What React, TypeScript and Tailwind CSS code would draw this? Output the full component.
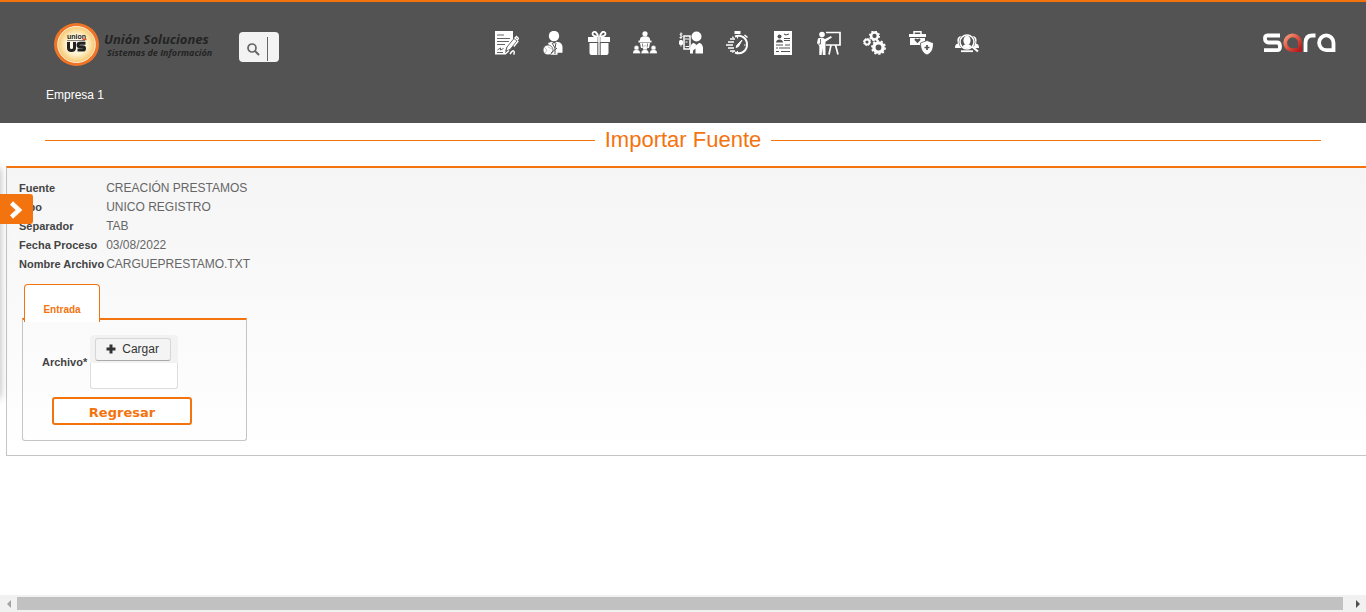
import type { ReactNode } from "react";

function Icon({ children }: { children: ReactNode }) {
  return (
    <svg viewBox="0 0 24 24" className="size-6" fill="#fff" stroke="none" aria-hidden="true">
      {children}
    </svg>
  );
}

const dark = "#535353";

const modules: { name: string; icon: ReactNode }[] = [
  {
    name: "Contratos",
    icon: (
      <>
        <path d="M0 0h18v9l-7 8-1 6.500H0z" />
        <path d="M2 4h7M2 7.500h13M2 10.500h12M2 13.500h8M2.500 19l3-2 0 2 3-1.500M2 21.500h6" stroke={dark} strokeWidth=".9" fill="none" />
        <path d="M12 16l7-8.500 3 2.500L15 18.500l-4 1.500z" stroke={dark} strokeWidth=".8" />
        <path d="M20 7l1.500-1.500 2 2-1.200 1.500zM23.300 10l-4.500 5.500M10 23.200l4-3.700M15 23c2-3 3-4 4-2.500s-1 3 .5 2.500" stroke="#fff" strokeWidth="1.400" fill="none" />
      </>
    ),
  },
  {
    name: "Empleados",
    icon: (
      <>
        <circle cx="13" cy="5" r="5.200" />
        <path d="M7 12l4-1.300 2 2 2.500-2c4 .3 6 2.300 6 6v5h-5v2H9v-6z" />
        <circle cx="7" cy="19" r="5" stroke={dark} strokeWidth=".8" />
        <path d="M11 12l3 5v6M15 12l-1 5M10 22l6-5" stroke={dark} fill="none" />
        <path d="M3 16l3 3-2 3M7 16l4 2" stroke="#aaa" strokeWidth=".7" fill="none" />
      </>
    ),
  },
  {
    name: "Beneficios",
    icon: (
      <>
        <path d="M1 6h22v5H1zM2.500 12h8V24h-6a2 2 0 0 1-2-2zM13.500 12h8V22a2 2 0 0 1-2 2h-6zM11.200 6h1.600v18h-1.600z" />
        <path d="M11 5.500C7.500 5.500 5.500 4.500 5.500 2.800S7.500 0 9 1.500s2 2 2 4zM13 5.500c3.500 0 5.500-1 5.500-2.700S16.500 0 15 1.500s-2 2-2 4z" fill="none" stroke="#fff" strokeWidth="1.800" />
        <path d="M10.800 6v18M13.200 6v18" stroke={dark} strokeWidth=".5" />
      </>
    ),
  },
  {
    name: "Organización",
    icon: (
      <>
        <circle cx="12" cy="2.800" r="2.600" />
        <path d="M7 9.500V8c0-1.500 2-2.700 5-2.700s5 1.200 5 2.700v1.500h1.500v2h-13v-2zM7 12h10l-1 5H8z" />
        <path d="M9.500 12.500v3M14.500 12.500v3" stroke={dark} strokeWidth=".7" />
        {[3.5, 12, 20.5].map((x) => (
          <g key={x} stroke={dark} strokeWidth=".3">
            <circle cx={x} cy="17" r="2.400" />
            <path d={`M${x - 3.900} 22.600c0-5.500 7.800-5.500 7.800 0z`} />
          </g>
        ))}
      </>
    ),
  },
  {
    name: "Nómina",
    icon: (
      <>
        <circle cx="17.500" cy="5.500" r="5" />
        <path d="M11 22.500c0-7 1-10.500 4-10.500l2.500 2 2.500-2c3 0 4.500 3 4.500 10.500h-8v-5l-2.500 2v3z" />
        <path d="M5 5h6v13H5z" fill="none" stroke="#fff" strokeWidth="1.500" />
        <path d="M6 8h4M6.500 11h2M6.500 15.500h3.500" stroke="#fff" />
        <rect x="0" y="9" width="4" height="5" rx="1.500" />
        <path d="M3.500 3C1 2 .5 4 2 4.500s2 2 0 2H.5M2 1.500V8M2 14v1.500" stroke="#fff" fill="none" />
      </>
    ),
  },
  {
    name: "Tiempos",
    icon: (
      <>
        <path d="M9.500 0h6v3h-6z" />
        <path d="M10 5.500c6-2.500 12 1.500 12 8s-6 10.500-12 8M7.500 6.700l1-.7M7.500 20.500l1 .7" fill="none" stroke="#fff" strokeWidth="2" />
        <path d="M19.500 4l3 2.500M5 8h5M3 11h6M1 14h7M3 17h6M5 20h5" stroke="#fff" strokeWidth="1.600" />
        <path d="M11 16.500l1-2.500 5-5-3.500 6.500z" stroke="#fff" />
        <path d="M12.500 6v1.500M19 14h1.500M12.500 20v1.500" stroke="#fff" />
      </>
    ),
  },
  {
    name: "Hojas de vida",
    icon: (
      <>
        <path d="M3 0h18v24H3z" />
        <circle cx="8.500" cy="5.500" r="2" fill={dark} />
        <path d="M5 11.500c0-4 7-4 7 0z" fill={dark} />
        <path d="M13 3l2 1 3-1M13 7.500h6M13 9.500h6M5 14h7M14 14h5M5 17h2M8 17h11M5 20.500h3M10 20.500h9" stroke={dark} strokeWidth="1.100" fill="none" />
      </>
    ),
  },
  {
    name: "Capacitación",
    icon: (
      <>
        <circle cx="5" cy="3.500" r="2.800" />
        <path d="M1 7.500c2-1 5-1 7 .5l6-3 .9 1.600L8.500 10.800V24H5.800l-.5-7-.6 7H2.300v-9L0 12z" />
        <path d="M9 1.500h14V14H9M14 14l-2 9.500M18.500 14l2.500 9.500" fill="none" stroke="#fff" strokeWidth="1.700" />
        <path d="M3.500 8v5H1.500" stroke={dark} strokeWidth=".8" fill="none" />
      </>
    ),
  },
  {
    name: "Procesos",
    icon: (
      <g fill="none" stroke="#fff">
        <circle cx="11.500" cy="5" r="3.400" strokeWidth="2.500" />
        <circle cx="11.500" cy="5" r="4.900" strokeWidth="1.300" strokeDasharray="1.900 1.950" />
        <circle cx="4" cy="11" r="2.500" strokeWidth="1.900" />
        <circle cx="4" cy="11" r="3.600" strokeWidth="1" strokeDasharray="1.400 1.430" />
        <circle cx="15.500" cy="16.500" r="4.600" strokeWidth="3.400" />
        <circle cx="15.500" cy="16.500" r="6.600" strokeWidth="1.700" strokeDasharray="2.200 1.950" />
      </g>
    ),
  },
  {
    name: "Seguridad y salud",
    icon: (
      <>
        <path d="M0 3h17v3H0zM1 7h15v7H1z" />
        <path d="M5 3V.8h7V3" fill="none" stroke="#fff" strokeWidth="1.500" />
        <path d="M8.500 12.200L5.500 9c0-2 2-2 3-.7 1-1.300 3-1.300 3 .7z" fill={dark} />
        <path d="M18 9.500l6.500 2.500c0 6-2 10-6.500 12-4.500-2-6.500-6-6.500-12z" stroke={dark} strokeWidth=".8" />
        <path d="M18 14v5M15.500 16.500h5" stroke={dark} strokeWidth="1.700" />
      </>
    ),
  },
  {
    name: "Selección",
    icon: (
      <>
        <path d="M0 17c0-3 1-4 3-4.500C1.500 8 3 5.500 6 5h12c3 .5 4.500 3 3 7.500 2 .5 3 1.500 3 4.500z" />
        <circle cx="12" cy="11" r="8.300" fill={dark} />
        <circle cx="12" cy="11" r="7" fill="none" stroke="#fff" strokeWidth="1.600" />
        <ellipse cx="12" cy="9.500" rx="3.600" ry="4.700" />
        <path d="M7.500 15.500c1-1.500 2-2 3.500-2.500h2c1.500.5 2.500 1 3.500 2.500-3 2.500-6 2.500-9 0z" />
        <path d="M17 15.500l6 5" stroke="#fff" strokeWidth="2.200" />
        <path d="M6 20.200h12" stroke="#fff" strokeWidth="1.800" />
      </>
    ),
  },
];

function CompanyLogo() {
  return (
    <a href="#inicio" className="flex items-center gap-1 text-[#242424]">
      <svg viewBox="0 0 46 44" className="h-11 w-[46px]" aria-hidden="true">
        <defs>
          <radialGradient id="glow">
            <stop offset="0" stopColor="#fff" />
            <stop offset=".55" stopColor="#fff3cf" />
            <stop offset="1" stopColor="#f5c66c" />
          </radialGradient>
        </defs>
        <ellipse cx="22.500" cy="21.500" rx="22.500" ry="21.500" fill="#ee7527" />
        <ellipse cx="22.500" cy="21.500" rx="18.800" ry="18" fill="url(#glow)" stroke="#fff0dc" strokeWidth="1" />
        <text x="13" y="16" fontFamily="Liberation Sans" fontWeight="bold" fontSize="7" fill="#222">union</text>
        <path d="M28.500 16.500h4" stroke="#ee4b27" strokeWidth="1.500" />
        <path d="M13 17.600h18" stroke="#555" strokeWidth=".8" />
        <path d="M14.500 19v6q0 2.500 3 2.500t3-2.500v-6M31.500 20.300h-5.500q-2 0-2 1.700t2 1.700h2.500q2 0 2 1.700t-2 1.700h-5" fill="none" stroke="#222" strokeWidth="3" />
      </svg>
      <span className="flex w-[113px] flex-col font-['Open_Sans','Noto_Sans',sans-serif] font-bold whitespace-nowrap italic">
        <span className="text-[13px] leading-4">Unión Soluciones</span>
        <span className="pl-[3px] text-[9px] leading-3">Sistemas de Información</span>
      </span>
    </a>
  );
}

function SaraLogo() {
  return (
    <svg viewBox="0 0 73 20" className="h-5 w-[73px]" role="img" aria-label="sara" fill="none" strokeWidth="3.800">
      <defs>
        <linearGradient id="red" x1="0" y1="0" x2="1" y2="1">
          <stop offset="0" stopColor="#f49a7c" />
          <stop offset=".5" stopColor="#e2533f" />
          <stop offset="1" stopColor="#b5191d" />
        </linearGradient>
      </defs>
      <path d="M17 2.500H4.500C2.500 2.500 2 3.500 2 5.500S3 9.500 5 9.500h9c2 0 3 1 3 4s-1 3.700-3 3.700H1" stroke="#fff" />
      <path d="M37 17.200h-7.500a7.400 7.400 0 1 1 7.500-7.400z" stroke="url(#red)" />
      <path d="M42.500 19v-9c0-5 2-7.500 7-7.500h3M70.500 19V9.800a7.200 7.400 0 1 0-7.200 7.400H69" stroke="#fff" />
    </svg>
  );
}

const details = [
  ["Fuente", "CREACIÓN PRESTAMOS"],
  ["Tipo", "UNICO REGISTRO"],
  ["Separador", "TAB"],
  ["Fecha Proceso", "03/08/2022"],
  ["Nombre Archivo", "CARGUEPRESTAMO.TXT"],
];

export default function App() {
  return (
    <div className="relative flex min-h-screen flex-col overflow-x-hidden bg-white font-['Liberation_Sans',Arial,sans-serif] text-[#444]">
      <header className="border-t-2 border-[#f3740f] bg-[#535353] pb-5">
        <div className="flex items-start pt-[21px]">
          <div className="flex w-[495px] shrink-0 items-center gap-[22px] pl-[54px]">
            <CompanyLogo />
            <form role="search" className="mt-1 flex h-[30px] w-10 items-center rounded bg-[#f3f3f3] pl-2">
              <button type="button" aria-label="Buscar" className="pt-1 text-[#666]">
                <svg viewBox="0 0 13 13" className="size-[13px]" fill="none" stroke="currentColor" strokeWidth="2">
                  <circle cx="5" cy="5" r="4" strokeWidth="1.700" />
                  <path d="M8 8l4 4" />
                </svg>
              </button>
              <input aria-label="Texto de búsqueda" className="mt-1 ml-[7px] h-6 w-2 border-l border-[#666] bg-transparent text-xs outline-none" />
            </form>
          </div>
          <nav className="flex gap-[22px] pt-2">
            {modules.map((m) => (
              <a key={m.name} href="#modulo" aria-label={m.name}>
                <Icon>{m.icon}</Icon>
              </a>
            ))}
          </nav>
          <div className="ml-auto pt-2.5 pr-[30px]">
            <SaraLogo />
          </div>
        </div>
        <p className="pt-5 pl-[46px] text-xs leading-4 text-white">Empresa 1</p>
      </header>

      <div className="flex items-center gap-2.5 px-[45px] pt-1 pb-[13px] text-[#f3740f]">
        <span className="h-px flex-1 bg-[#f3740f]" />
        <h1 className="text-[22px] leading-[26px]">Importar Fuente</h1>
        <span className="h-px flex-1 bg-[#f3740f]" />
      </div>

      <main className="ml-1.5 border-t-2 border-b border-l border-t-[#f3740f] border-b-[#c5c5c5] border-l-[#c5c5c5] bg-linear-to-b from-[#f5f5f5] to-white pt-[11px] pb-3.5 pl-3">
        <table className="border-collapse text-left">
          <tbody>
            {details.map(([label, value]) => (
              <tr key={label} className="h-[19px]">
                <th scope="row" className="p-0 pr-0.5 text-[11px] leading-[19px] font-bold text-[#444]">{label}</th>
                <td className="p-0 text-xs leading-[19px] text-[#666]">{value}</td>
              </tr>
            ))}
          </tbody>
        </table>

        <section className="mt-2.5 ml-[3px] w-[225px]">
          <div role="tablist" className="flex pl-0.5">
            <button
              type="button"
              role="tab"
              aria-selected="true"
              className="z-10 -mb-1 h-[38px] w-[76px] rounded-t border border-b-0 border-[#f3740f] bg-white pt-[11px] text-[10px] font-bold text-[#f3740f]"
            >
              Entrada
            </button>
          </div>
          <div role="tabpanel" className="rounded-b-[3px] border border-t-2 border-[#c5c5c5] border-t-[#f3740f] pt-[15px] pb-[15px]">
            <div className="flex items-center gap-[3px] pl-[19px]">
              <label htmlFor="archivo" className="text-[11px] leading-4 font-bold">Archivo*</label>
              <div className="w-[88px]">
                <div className="rounded-t bg-[#f2f2f2] px-[5px] pt-[3px] pb-0.5">
                  <button
                    id="archivo"
                    type="button"
                    className="flex h-[23px] w-[76px] items-center gap-1.5 rounded-[3px] border border-[#d6d6d6] border-b-[#aaa] bg-[#f4f4f4] pb-0.5 pl-2.5 text-xs text-[#333]"
                  >
                    <svg viewBox="0 0 10 10" className="size-2.5" aria-hidden="true">
                      <path d="M5 .5v9M.5 5h9" stroke="#333" strokeWidth="3" />
                    </svg>
                    Cargar
                  </button>
                </div>
                <div className="h-[26px] rounded-b-[3px] border border-t-0 border-[#ddd] bg-white" />
              </div>
            </div>
            <button
              type="button"
              className="mt-2 ml-[29px] block h-7 w-[140px] rounded-[3px] border-2 border-[#f3740f] bg-white pt-[3px] font-['DejaVu_Sans',Verdana,sans-serif] text-[13px] font-bold text-[#f3740f]"
            >
              Regresar
            </button>
          </div>
        </section>
      </main>

      <div className="absolute top-[168px] -left-10 h-[230px] w-10 shadow-[0_0_8px_rgba(0,0,0,0.3)]" />
      <button
        type="button"
        aria-label="Abrir menú"
        className="absolute top-[194px] left-0 flex h-[30px] w-[33px] items-center rounded-r-[3px] bg-[#f3740f] pt-0.5 pl-[9px]"
      >
        <svg viewBox="0 0 14 18" className="h-[18px] w-3.5" fill="none" stroke="#fff" strokeWidth="4.500" aria-hidden="true">
          <path d="M2.500 2l7.500 7-7.500 7" />
        </svg>
      </button>

      <div className="mt-auto flex h-[17px] items-center bg-[#f1f1f1]" aria-hidden="true">
        <span className="flex w-[17px] justify-center">
          <svg viewBox="0 0 4 8" className="h-2 w-1" fill="#a3a3a3"><path d="M4 0v8L0 4z" /></svg>
        </span>
        <span className="h-[13px] flex-1 bg-[#c1c1c1]" />
        <span className="flex w-[23px] justify-end pr-1.5">
          <svg viewBox="0 0 4 8" className="h-2 w-1" fill="#505050"><path d="M0 0v8l4-4z" /></svg>
        </span>
      </div>
    </div>
  );
}
